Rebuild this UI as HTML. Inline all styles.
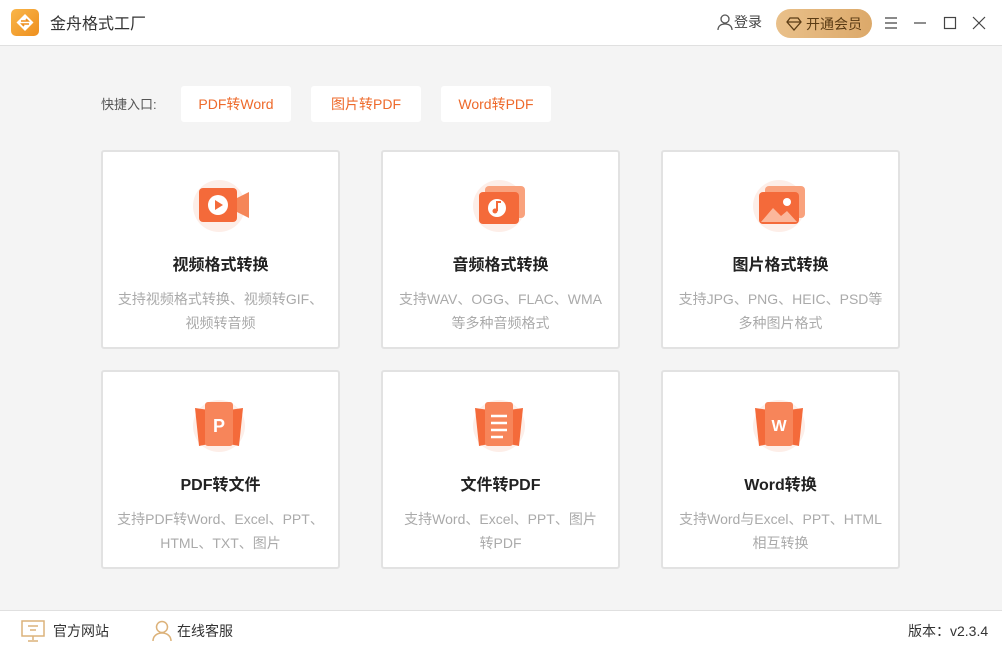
<!DOCTYPE html><html><head><meta charset="utf-8"><style>
*{margin:0;padding:0;box-sizing:border-box}
body{width:1002px;height:652px;background:#f4f4f4;font-family:"Liberation Sans","Noto Sans CJK SC",sans-serif;position:relative;overflow:hidden}
.top{position:absolute;left:0;top:0;width:1002px;height:46px;background:#fff;border-bottom:1px solid #e0e0e0}
.logo{position:absolute;left:11px;top:9px;width:28px;height:27px;border-radius:5px;background:linear-gradient(135deg,#f9b64a,#ee8f1e)}
.title{position:absolute;left:50px;top:10px;font-size:16px;color:#333}
.tr{position:absolute;top:-1px;height:46px;display:flex;align-items:center;font-size:14px;color:#444}
.vip{position:absolute;left:776px;top:9px;width:96px;height:29px;border-radius:15px;background:linear-gradient(90deg,#e9c08a,#dca96a);font-size:14px;color:#5a3b14;display:flex;align-items:center;justify-content:center;gap:4px}
.ql{position:absolute;left:101px;top:94px;font-size:13px;color:#555}
.qb{position:absolute;top:86px;width:110px;height:36px;background:#fff;border-radius:3px;color:#ee6a2b;font-size:14px;text-align:center;line-height:36px}
.card{position:absolute;width:239px;height:199px;background:#fff;border:2px solid #e2e2e2;border-radius:3px;text-align:center}
.card svg{position:absolute;left:86px;top:22px}
.card h3{position:absolute;top:99px;width:100%;font-size:16px;color:#222;font-weight:bold}
.card p{position:absolute;top:135px;left:0;right:0;font-size:14px;color:#aaa;line-height:24px;white-space:nowrap}
.foot{position:absolute;left:0;top:610px;width:1002px;height:42px;background:#fff;border-top:1px solid #e0e0e0;font-size:14px;color:#333}
</style></head><body>
<div class="top">
<div class="logo"><svg width="28" height="27"><rect x="8" y="7.5" width="12" height="12" transform="rotate(45 14 13.5)" fill="#fff"/><path d="M10 12h7l-2-2M18 15h-7l2 2" stroke="#ee8f1e" stroke-width="1.6" fill="none"/></svg></div>
<div class="title">金舟格式工厂</div>
<div class="tr" style="left:716px"><svg width="18" height="18"><circle cx="9" cy="6" r="4" fill="none" stroke="#555" stroke-width="1.3"/><path d="M2 17c0-4 3-6 7-6s7 2 7 6" fill="none" stroke="#555" stroke-width="1.3"/></svg>登录</div>
<div class="vip"><svg width="16" height="14"><path d="M1 5l3-4h8l3 4-7 8z M1 5h14" fill="none" stroke="#5a3b14" stroke-width="1.3"/></svg>开通会员</div>
<svg style="position:absolute;left:884px;top:16px" width="14" height="14"><path d="M1 2h12M1 7h12M1 12h12" stroke="#444" stroke-width="1.2"/></svg>
<svg style="position:absolute;left:913px;top:16px" width="14" height="14"><path d="M1 7h12" stroke="#444" stroke-width="1.2"/></svg>
<svg style="position:absolute;left:943px;top:16px" width="14" height="14"><rect x="1.5" y="1.5" width="11" height="11" fill="none" stroke="#444" stroke-width="1.2"/></svg>
<svg style="position:absolute;left:972px;top:16px" width="14" height="14"><path d="M1 1l12 12M13 1L1 13" stroke="#444" stroke-width="1.2"/></svg>
</div>
<div class="ql">快捷入口:</div>
<div class="qb" style="left:181px">PDF转Word</div>
<div class="qb" style="left:311px">图片转PDF</div>
<div class="qb" style="left:441px">Word转PDF</div>

<div class="card" style="left:101px;top:150px"><svg width="66" height="60"><circle cx="30" cy="32" r="26" fill="#fdeee8"/><rect x="10" y="14" width="38" height="34" rx="4" fill="#f46a3a"/><path d="M48 24l12-6v26l-12-6z" fill="#f58658"/><circle cx="29" cy="31" r="10" fill="#fff"/><path d="M26 26l8 5-8 5z" fill="#f46a3a"/></svg><h3>视频格式转换</h3><p>支持视频格式转换、视频转GIF、<br>视频转音频</p></div>
<div class="card" style="left:381px;top:150px"><svg width="66" height="60"><circle cx="30" cy="32" r="26" fill="#fdeee8"/><rect x="16" y="12" width="40" height="32" rx="4" fill="#f9a27d"/><rect x="10" y="18" width="40" height="32" rx="4" fill="#f46a3a"/><circle cx="28" cy="34" r="9" fill="#fff"/><path d="M28 37v-9h4" stroke="#f46a3a" stroke-width="2" fill="none"/><circle cx="26" cy="37" r="2.5" fill="#f46a3a"/></svg><h3>音频格式转换</h3><p>支持WAV、OGG、FLAC、WMA<br>等多种音频格式</p></div>
<div class="card" style="left:661px;top:150px"><svg width="66" height="60"><circle cx="30" cy="32" r="26" fill="#fdeee8"/><rect x="16" y="12" width="40" height="32" rx="4" fill="#f9a27d"/><rect x="10" y="18" width="40" height="32" rx="4" fill="#f46a3a"/><path d="M12 48l12-14 8 8 6-5 10 11z" fill="#fbb79b"/><circle cx="38" cy="28" r="4" fill="#fff"/></svg><h3>图片格式转换</h3><p>支持JPG、PNG、HEIC、PSD等<br>多种图片格式</p></div>
<div class="card" style="left:101px;top:370px"><svg width="66" height="60"><circle cx="30" cy="32" r="26" fill="#fdeee8"/><path d="M6 14l14 2v34l-10 2z M54 14l-14 2v34l10 2z" fill="#f46a3a"/><rect x="16" y="8" width="28" height="44" rx="3" fill="#f7855a"/><text x="30" y="38" font-size="18" font-weight="bold" fill="#fff" text-anchor="middle" font-family="Liberation Sans">P</text></svg><h3>PDF转文件</h3><p>支持PDF转Word、Excel、PPT、<br>HTML、TXT、图片</p></div>
<div class="card" style="left:381px;top:370px"><svg width="66" height="60"><circle cx="30" cy="32" r="26" fill="#fdeee8"/><path d="M6 14l14 2v34l-10 2z M54 14l-14 2v34l10 2z" fill="#f46a3a"/><rect x="16" y="8" width="28" height="44" rx="3" fill="#f7855a"/><path d="M22 22h16M22 29h16M22 36h16M22 43h12" stroke="#fff" stroke-width="2.5"/></svg><h3>文件转PDF</h3><p>支持Word、Excel、PPT、图片<br>转PDF</p></div>
<div class="card" style="left:661px;top:370px"><svg width="66" height="60"><circle cx="30" cy="32" r="26" fill="#fdeee8"/><path d="M6 14l14 2v34l-10 2z M54 14l-14 2v34l10 2z" fill="#f46a3a"/><rect x="16" y="8" width="28" height="44" rx="3" fill="#f7855a"/><text x="30" y="37" font-size="16" font-weight="bold" fill="#fff" text-anchor="middle" font-family="Liberation Sans">W</text></svg><h3>Word转换</h3><p>支持Word与Excel、PPT、HTML<br>相互转换</p></div>

<div class="foot">
<svg style="position:absolute;left:21px;top:9px" width="24" height="22"><rect x="1" y="1" width="22" height="15" fill="none" stroke="#dcb27a" stroke-width="1.5"/><path d="M7 6h10M9 10h6M12 16v4M7 21h10" stroke="#dcb27a" stroke-width="1.5"/></svg>
<span style="position:absolute;left:53px;top:10px">官方网站</span>
<svg style="position:absolute;left:152px;top:9px" width="20" height="22"><circle cx="10" cy="7" r="5.5" fill="none" stroke="#dcb27a" stroke-width="1.5"/><path d="M1 21c0-5 4-8 9-8s9 3 9 8" fill="none" stroke="#dcb27a" stroke-width="1.5"/></svg>
<span style="position:absolute;left:177px;top:10px">在线客服</span>
<span style="position:absolute;left:908px;top:10px">版本：v2.3.4</span>
</div>
</body></html>
